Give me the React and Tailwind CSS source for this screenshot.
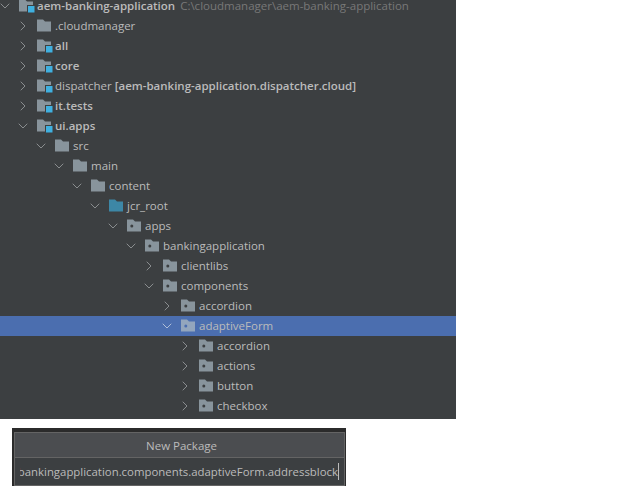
import React from 'react';
import { ChevronRight, ChevronDown } from 'lucide-react';

const rows = [
    { depth: 0, open: true, name: 'aem-banking-application', bold: true, kind: 'module', hint: 'C:\\cloudmanager\\aem-banking-application' },
    { depth: 1, name: '.cloudmanager', kind: 'plain' },
    { depth: 1, name: 'all', bold: true, kind: 'module' },
    { depth: 1, name: 'core', bold: true, kind: 'module' },
    { depth: 1, name: 'dispatcher', suffix: '[aem-banking-application.dispatcher.cloud]', kind: 'module' },
    { depth: 1, name: 'it.tests', bold: true, kind: 'module' },
    { depth: 1, open: true, name: 'ui.apps', bold: true, kind: 'module' },
    { depth: 2, open: true, name: 'src', kind: 'plain' },
    { depth: 3, open: true, name: 'main', kind: 'plain' },
    { depth: 4, open: true, name: 'content', kind: 'plain' },
    { depth: 5, open: true, name: 'jcr_root', kind: 'root' },
    { depth: 6, open: true, name: 'apps', kind: 'pkg' },
    { depth: 7, open: true, name: 'bankingapplication', kind: 'pkg' },
    { depth: 8, name: 'clientlibs', kind: 'pkg' },
    { depth: 8, open: true, name: 'components', kind: 'pkg' },
    { depth: 9, name: 'accordion', kind: 'pkg' },
    { depth: 9, open: true, name: 'adaptiveForm', kind: 'pkg', selected: true },
    { depth: 10, name: 'accordion', kind: 'pkg' },
    { depth: 10, name: 'actions', kind: 'pkg' },
    { depth: 10, name: 'button', kind: 'pkg' },
    { depth: 10, name: 'checkbox', kind: 'pkg' },
];

const FolderIcon = ({ kind, selected }) => {
    const fill = kind === 'root' ? '#3d87a6' : selected ? '#93a6bd' : '#88949c';
    const dot = selected ? '#4b6eaf' : '#3c3f41';
    return (
        <svg width="16" height="16" viewBox="0 0 16 16" className="shrink-0 overflow-visible">
            <path d="M1 1.500h6l2 2h6v10H1z" fill={fill} />
            {kind === 'pkg' && <circle cx="5.800" cy="8" r="1.500" fill={dot} />}
            {kind === 'module' && <rect x="9.500" y="7.500" width="7.500" height="7.500" fill="#3fb0e0" stroke="#3c3f41" strokeWidth="1" />}
        </svg>
    );
};

const TreeRow = ({ row }) => {
    const Chevron = row.open ? ChevronDown : ChevronRight;
    return (
        <div className={`flex h-5 items-center ${row.selected ? 'bg-[#4b6eaf]' : ''}`}>
            <Chevron
                size={16}
                strokeWidth={1.25}
                style={{ marginLeft: row.depth * 18 - 3 }}
                className={`mr-[5px] shrink-0 ${row.selected ? 'text-[#c4cfe0]' : 'text-[#9a9d9f]'}`}
            />
            <FolderIcon kind={row.kind} selected={row.selected} />
            <span className={`ml-[3px] whitespace-nowrap ${row.bold ? 'font-semibold' : ''}`}>{row.name}</span>
            {row.suffix && <span className="ml-[3px] whitespace-nowrap font-semibold">{row.suffix}</span>}
            {row.hint && <span className="ml-[5px] whitespace-nowrap text-[#787878]">{row.hint}</span>}
        </div>
    );
};

const App = () => {
    return (
        <div className="h-[497px] w-[635px] overflow-hidden bg-white font-['Open_Sans',sans-serif] text-[11.5px]">
            <div className="h-[419px] w-[456px] overflow-hidden bg-[#3c3f41] text-[#bbbbbb]">
                <div className="-mt-1">
                    {rows.map((row, i) => (
                        <TreeRow key={i} row={row} />
                    ))}
                </div>
            </div>
            <div className="ml-3 mt-[9px] h-[58px] w-[334px] bg-[#2b2b2b] pl-[2px] pt-[4px]">
                <div className="w-[331px] border border-[#646464] bg-[#3c3f41]">
                    <div className="flex h-[24px] items-center justify-center bg-[#4b4d50] pl-1 pt-[2px] text-[#bbbbbb]">New Package</div>
                    <div className="flex h-[28px] items-center border-t border-[#646464] bg-[#3c3f41] pl-[5px] pr-[5px] text-[11.4px] text-[#bbbbbb]">
                        <div className="flex min-w-0 flex-1 items-center justify-end overflow-hidden">
                            <span className="whitespace-nowrap">bankingapplication.components.adaptiveForm.addressblock</span>
                            <span className="h-[17px] w-px shrink-0 bg-[#bbbbbb]" />
                        </div>
                    </div>
                </div>
            </div>
        </div>
    );
};

export default App;
